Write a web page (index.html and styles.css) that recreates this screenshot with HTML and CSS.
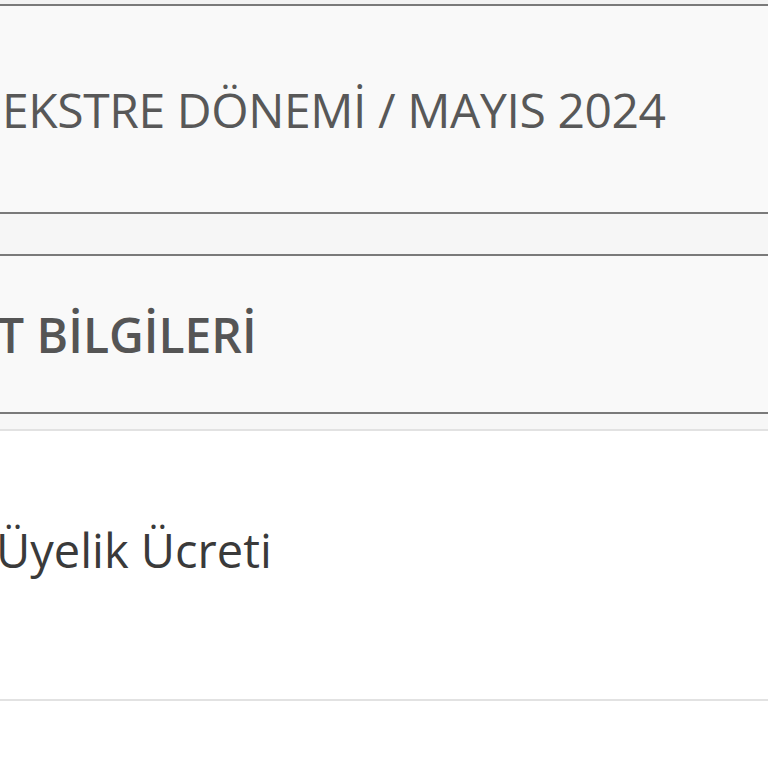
FILE: index.html
```html
<!DOCTYPE html>
<html lang="tr">
<head>
<meta charset="utf-8">
<link rel="stylesheet" href="styles.css">
</head>
<body>
<div class="page">
  <div class="top-strip"></div>
  <div class="panel period">
    <span class="period-text">EKSTRE DÖNEMİ / MAYIS 2024</span>
  </div>
  <div class="gap"></div>
  <div class="panel section">
    <span class="section-text">T BİLGİLERİ</span>
  </div>
  <div class="gap small"></div>
  <div class="row">
    <span class="row-text">Üyelik Ücreti</span>
  </div>
  <div class="rest"></div>
</div>
</body>
</html>
```
FILE: styles.css
```css
html, body {
  margin: 0;
  padding: 0;
  background: #ffffff;
  overflow: hidden;
}
.page {
  width: 768px;
  height: 768px;
  font-family: "Open Sans", "Noto Sans", sans-serif;
  display: flex;
  flex-direction: column;
  overflow: hidden;
}
.top-strip {
  height: 4px;
  background: #f3f3f3;
  border-bottom: 2px solid #7a7a7a;
}
.panel {
  background: #f9f9f9;
  display: flex;
  align-items: center;
}
.period {
  height: 206px;
  border-bottom: 2px solid #7a7a7a;
}
.period-text {
  font-size: 48px;
  color: #585858;
  margin-left: 2px;
  white-space: nowrap;
  letter-spacing: -0.4px;
}
.gap {
  height: 40px;
  background: #f6f6f6;
  border-bottom: 2px solid #7a7a7a;
}
.section {
  height: 156px;
  border-bottom: 2px solid #7a7a7a;
}
.section-text {
  font-size: 48px;
  font-weight: 600;
  color: #555555;
  margin-left: -3px;
  white-space: nowrap;
}
.gap.small {
  height: 15px;
  background: #f7f7f7;
  border-bottom: 2px solid #e2e2e2;
}
.row {
  height: 270px;
  box-sizing: border-box;
  padding-bottom: 30px;
  background: #ffffff;
  border-bottom: 2px solid #e2e2e2;
  display: flex;
  align-items: center;
}
.row-text {
  font-size: 47px;
  color: #3a3a3a;
  margin-left: -4px;
  white-space: nowrap;
}
.rest {
  flex: 1;
  background: #ffffff;
}
```
